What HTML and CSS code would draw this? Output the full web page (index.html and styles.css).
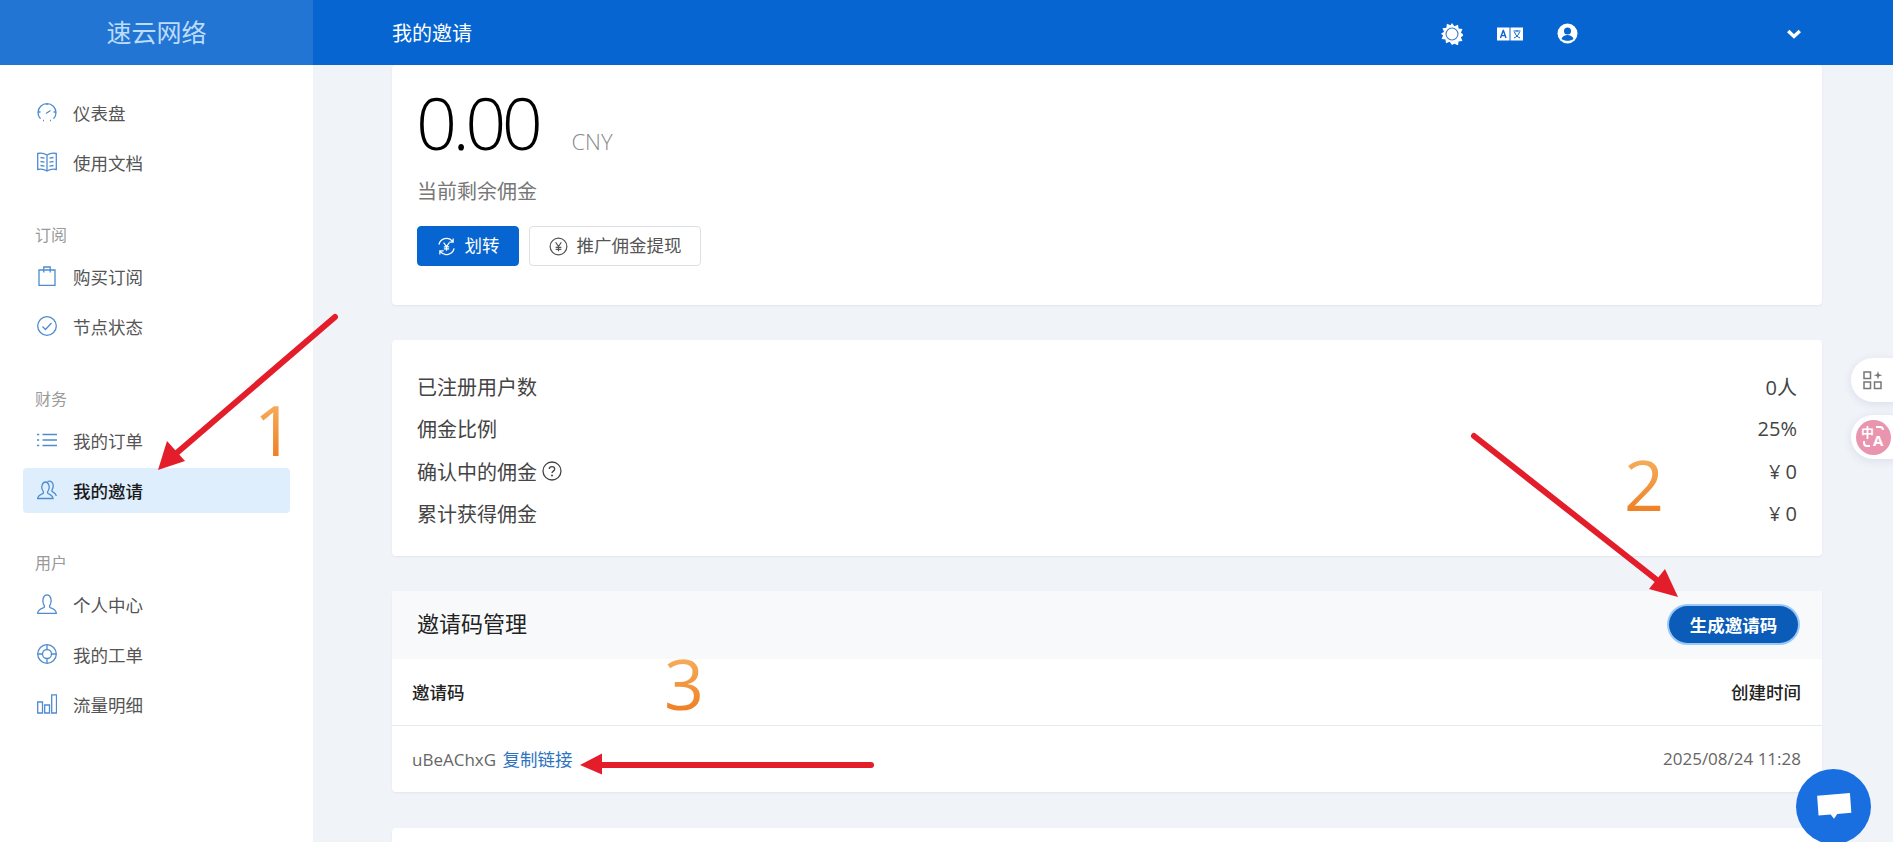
FILE: index.html
```html
<!DOCTYPE html>
<html lang="zh-CN">
<head>
  <meta charset="UTF-8">
  <title>我的邀请</title>
  <link rel="stylesheet" href="styles.css">
</head>
<body>
  <div class="page">
    <!-- Top bar -->
    <header class="topbar">
      <div class="brand">速云网络</div>
      <div class="topbar-main">
        <div class="page-title">我的邀请</div>
        <div class="topbar-tools">
          <svg class="tool-sun" width="22" height="22" viewBox="0 0 24 24">
            <path fill="#fff" d="M12 0l2.600 3.500 4-1.700.5 4.300 4.300.5-1.700 4 3.500 2.400-3.500 2.600 1.700 4-4.300.5-.5 4.300-4-1.700L12 24l-2.600-3.500-4 1.700-.5-4.300-4.300-.5 1.700-4L-.2 12l3.500-2.400-1.700-4 4.300-.5.5-4.300 4 1.700z"/>
            <circle cx="12" cy="12" r="6.500" fill="#fff" stroke="#3b7cc9" stroke-width="1.200"/>
          </svg>
          <svg class="tool-lang" width="26" height="14" viewBox="0 0 26 14">
            <rect x="0" y="0.500" width="12.500" height="13" fill="#fff"/>
            <rect x="13.500" y="0.500" width="12.500" height="13" fill="#fff"/>
            <path d="M3.500 11l2.700-7.500h.2L9 11M4.500 8.600h3.600" fill="none" stroke="#0665d0" stroke-width="1.400"/>
            <path d="M16.500 4h7M20 3v1.500M17.500 5c1 3 3 5 5.500 6M22.500 5c-1 3-3 5-5.500 6" fill="none" stroke="#0665d0" stroke-width="1"/>
          </svg>
          <svg class="tool-user" width="21" height="21" viewBox="0 0 21 21">
            <circle cx="10.500" cy="10.500" r="10" fill="#fff"/>
            <circle cx="10.500" cy="8" r="3.500" fill="#0665d0"/>
            <path d="M4.500 16c1-3 3.500-4 6-4s5 1 6 4c-3 2.400-9 2.400-12 0z" fill="#0665d0"/>
          </svg>
          <svg class="tool-chevron" width="14" height="10" viewBox="0 0 14 10">
            <path d="M1.200 2l5.800 5.500L12.800 2" fill="none" stroke="#fff" stroke-width="3.400"/>
          </svg>
        </div>
      </div>
    </header>

    <!-- Sidebar navigation -->
    <nav class="sidebar">
      <a class="nav-item">
        <svg class="nav-icon" viewBox="0 0 20 20"><path d="M3.500 16.800A9 9 0 1 1 16.500 16.800M6 18.500h1M13 18.500h1M9 11.500l4.500-3M10 1v2M1.500 10h2M16.500 10h2"/></svg>
        仪表盘
      </a>
      <a class="nav-item">
        <svg class="nav-icon" viewBox="0 0 20 20"><path d="M.7 1.500c3.300-.8 6.300-.3 9.300 1.500 3-1.800 6-2.300 9.300-1.500v16c-3.300-.8-6.300-.3-9.300 1.500-3-1.800-6-2.300-9.300-1.500zM10 3v16M3.500 5.500l4 .7M3.500 9.500l4 .7M3.500 13.500l4 .7M12.500 6.200l4-.7M12.500 10.200l4-.7M12.500 14.200l4-.7"/></svg>
        使用文档
      </a>

      <div class="nav-label">订阅</div>
      <a class="nav-item">
        <svg class="nav-icon" viewBox="0 0 20 20"><path d="M2 4h16v15.500H2zM6.800 6.500V1h6.400v5.500"/></svg>
        购买订阅
      </a>
      <a class="nav-item">
        <svg class="nav-icon" viewBox="0 0 20 20"><circle cx="10" cy="10" r="9.300"/><path d="M5.500 10.500l3 3 6-6.500"/></svg>
        节点状态
      </a>

      <div class="nav-label">财务</div>
      <a class="nav-item">
        <svg class="nav-icon" viewBox="0 0 20 20"><path d="M5.500 4.500H20M5.500 10H20M5.500 15.500H20M0 4.500h2.200M0 10h2.200M0 15.500h2.200"/></svg>
        我的订单
      </a>
      <a class="nav-item nav-item-active">
        <svg class="nav-icon" viewBox="0 0 20 20"><path d="M.7 18.500c0-3 2.800-4 5.300-5 1-1 .5-2-.5-3.500C4 7.500 5 2 8.500 2c3.500 0 4.500 5.500 3 8-1 1.500-1.500 2.500-.5 3.500 2 1 5 2 5 5zM10.500 1.500c3.500-1.500 6.500 1.500 5.500 6-.3 1.500-1.500 2.500-1 4 1.500 1 4 1.500 4.300 4.500"/></svg>
        我的邀请
      </a>

      <div class="nav-label">用户</div>
      <a class="nav-item">
        <svg class="nav-icon" viewBox="0 0 20 20"><path d="M.7 19.300c0-3.800 3.300-4.800 6.300-5.800 1-1 .5-2-.5-3.500C5 7 6 .8 10 .8s5 6.200 3.500 9.200c-1 1.500-1.500 2.500-.5 3.500 3 1 6.300 2 6.300 5.800z"/></svg>
        个人中心
      </a>
      <a class="nav-item">
        <svg class="nav-icon" viewBox="0 0 20 20"><circle cx="10" cy="10" r="9.300"/><circle cx="10" cy="10" r="4.500"/><path d="M10 .7v4.800M10 14.500v4.800M.7 10h4.800M14.500 10h4.800"/></svg>
        我的工单
      </a>
      <a class="nav-item">
        <svg class="nav-icon" viewBox="0 0 20 20"><path d="M.7 8h4.800v11H.7zM7.700 11h4.800v8H7.700zM14.700 .8h4.800V19h-4.800z"/></svg>
        流量明细
      </a>
    </nav>

    <!-- Page content -->
    <main class="content">
      <section class="card balance-card">
        <div class="balance-line">
          <span class="balance-value">0.00</span>
          <span class="balance-unit">CNY</span>
        </div>
        <div class="balance-label">当前剩余佣金</div>
        <div class="balance-actions">
          <button class="btn btn-primary">
            <svg class="btn-icon" viewBox="0 0 20 20">
              <path d="M2 8a8.300 8.300 0 0 1 14.500-3.500M18 12a8.300 8.300 0 0 1-14.500 3.500M17 1.500v4h-4M3 18.500v-4h4"/>
              <path d="M7 6l3 4 3-4M10 10v4.500M7.200 10.500h5.600M7.200 12.500h5.600"/>
            </svg>
            划转
          </button>
          <button class="btn btn-outline">
            <svg class="btn-icon" viewBox="0 0 20 20">
              <circle cx="10" cy="10" r="8.800"/>
              <path d="M7 5.500l3 4.500 3-4.500M10 10v5M7 11h6M7 13h6"/>
            </svg>
            推广佣金提现
          </button>
        </div>
      </section>

      <section class="card stats-card">
        <div class="stat-row"><span>已注册用户数</span><span>0人</span></div>
        <div class="stat-row"><span>佣金比例</span><span>25%</span></div>
        <div class="stat-row">
          <span class="stat-help">确认中的佣金
            <svg width="20" height="20" viewBox="0 0 20 20"><circle cx="10" cy="10" r="9" fill="none" stroke="#444" stroke-width="1.300"/><path d="M7.300 8c0-3.200 5.400-3.200 5.400 0 0 2.200-2.700 2-2.700 4" fill="none" stroke="#444" stroke-width="1.300"/><circle cx="10" cy="14.600" r="1" fill="#444"/></svg>
          </span>
          <span>¥ 0</span>
        </div>
        <div class="stat-row"><span>累计获得佣金</span><span>¥ 0</span></div>
      </section>

      <section class="card codes-card">
        <div class="codes-header">
          <h3 class="codes-title">邀请码管理</h3>
          <button class="btn-generate">生成邀请码</button>
        </div>
        <div class="codes-row codes-head">
          <span>邀请码</span>
          <span>创建时间</span>
        </div>
        <div class="codes-row">
          <span>uBeAChxG <a class="copy-link">复制链接</a></span>
          <span>2025/08/24 11:28</span>
        </div>
      </section>

      <section class="card next-card"></section>
    </main>
  </div>

  <!-- Floating extension buttons -->
  <div class="float-btn float-apps">
    <svg width="20" height="20" viewBox="0 0 20 20" fill="none" stroke="#777" stroke-width="1.500">
      <rect x="1" y="2" width="6.500" height="6.500"/>
      <rect x="1" y="12" width="6.500" height="6.500"/>
      <rect x="11.500" y="12" width="6.500" height="6.500"/>
      <path d="M15 1l1 3.300 3.300 1-3.300 1-1 3.300-1-3.300-3.300-1 3.300-1z" fill="#777" stroke="none"/>
    </svg>
  </div>
  <div class="float-btn float-translate">
    <div class="translate-badge">
      <span>中</span>
      <span class="translate-a">A</span>
      <svg class="translate-arcs" width="35" height="35" viewBox="0 0 35 35" fill="none" stroke="#fff" stroke-width="2">
        <path d="M20 7h4c2 0 3 1 3 3"/>
        <path d="M8 21v2c0 2 1 3 3 3h3"/>
      </svg>
    </div>
  </div>

  <!-- Chat launcher -->
  <div class="chat-btn">
    <svg width="36" height="30" viewBox="0 0 38 32"><path fill="#fff" d="M1 4l35-3 1.500 21-15 1.500-3.500 5-3.500-4.500-13 1z"/></svg>
  </div>

  <!-- Annotations drawn over the screenshot -->
  <svg class="arrows" width="1893" height="842" viewBox="0 0 1893 842">
    <g fill="#e31e2a" stroke="#e31e2a">
      <path d="M335 317L172 457" stroke-width="6" stroke-linecap="round"/>
      <path d="M158 470l9-29 18 20z" stroke="none"/>
      <path d="M1474 436L1662 584" stroke-width="6" stroke-linecap="round"/>
      <path d="M1678 597l-29-8 16-20z" stroke="none"/>
      <path d="M871 765H600" stroke-width="6" stroke-linecap="round"/>
      <path d="M580 765l22-11.500v21z" stroke="none"/>
    </g>
  </svg>
  <span class="step step-one">1</span>
  <span class="step step-two">2</span>
  <span class="step step-three">3</span>
</body>
</html>
```

FILE: styles.css
```css
/* Page base */
* {
  box-sizing: border-box;
}

html,
body {
  margin: 0;
  height: 100%;
  overflow: hidden;
}

body {
  position: relative;
  background: #f0f3f8;
  color: #444;
  font-family: "Open Sans", "Noto Sans CJK SC", sans-serif;
  font-size: 17px;
}

.page {
  display: grid;
  grid-template-columns: 313px 1fr;
  grid-template-rows: 65px 1fr;
  height: 842px;
}

/* Top bar */
.topbar {
  grid-column: 1 / 3;
  display: flex;
  background: #0665d0;
}

.brand {
  width: 313px;
  background: #2375d4;
  color: #bcdcfb;
  font-size: 25px;
  line-height: 65px;
  text-align: center;
}

.topbar-main {
  flex: 1;
  display: flex;
  align-items: center;
  padding: 0 92px 0 79px;
}

.page-title {
  color: #fff;
  font-size: 20px;
}

.topbar-tools {
  margin-left: auto;
  display: flex;
  align-items: center;
  padding-top: 2px;
}

.tool-lang {
  margin-left: 34px;
}

.tool-user {
  margin-left: 34.500px;
}

.tool-chevron {
  margin-left: 209px;
}

/* Sidebar */
.sidebar {
  display: flex;
  flex-direction: column;
  background: #fff;
  padding-top: 22px;
}

.nav-item {
  display: flex;
  align-items: center;
  gap: 16px;
  height: 45px;
  margin: 2.500px 23px;
  padding-left: 14px;
  border-radius: 4px;
  color: #555;
  font-size: 17.500px;
}

.nav-item-active {
  background: #deeefd;
  color: #1a1a1a;
  font-weight: 500;
}

.nav-icon {
  width: 20px;
  height: 20px;
  flex-shrink: 0;
  fill: none;
  stroke: #4f8ccf;
  stroke-width: 1.300;
}

.nav-label {
  height: 64px;
  padding: 36px 0 0 35px;
  color: #999;
  font-size: 16px;
  line-height: 24px;
}

/* Content column */
.content {
  padding: 0 71px 0 79px;
  overflow: hidden;
}

.card {
  background: #fff;
  border-radius: 4px;
  box-shadow: 0 1px 2px rgba(60, 80, 120, 0.08);
  margin-bottom: 35px;
}

/* Balance card */
.balance-card {
  height: 240px;
  padding: 17px 25px 0;
}

.balance-line {
  display: flex;
  align-items: baseline;
  gap: 33px;
  height: 80px;
  margin-left: -1px;
}

.balance-value {
  color: #000;
  font-size: 72px;
  font-weight: 300;
  letter-spacing: -4.500px;
  line-height: 80px;
}

.balance-unit {
  color: #888;
  font-size: 22px;
  font-weight: 300;
}

.balance-label {
  margin-top: 16px;
  color: #777;
  font-size: 20px;
  line-height: 28px;
}

.balance-actions {
  display: flex;
  gap: 10px;
  margin-top: 20px;
}

.btn {
  display: flex;
  align-items: center;
  justify-content: center;
  gap: 9px;
  height: 40px;
  padding: 0 0 4px;
  border-radius: 4px;
  font-family: inherit;
  font-size: 17.500px;
}

.btn-icon {
  width: 19px;
  height: 19px;
  margin-top: 4px;
  fill: none;
  stroke: currentColor;
  stroke-width: 1.300;
}

.btn-primary {
  width: 102px;
  background: #0665d0;
  border: 1px solid #0665d0;
  color: #fff;
}

.btn-outline {
  width: 172px;
  background: #fff;
  border: 1px solid #dcdfe4;
  color: #555;
}

/* Stats card */
.stats-card {
  height: 216px;
  padding: 25px 25px 21px;
}

.stat-row {
  display: flex;
  justify-content: space-between;
  align-items: center;
  height: 42.500px;
  font-size: 20px;
}

.stat-help {
  display: flex;
  align-items: center;
  gap: 5px;
}

/* Invite codes card */
.codes-card {
  height: 201px;
  margin-bottom: 36px;
}

.codes-header {
  display: flex;
  justify-content: space-between;
  align-items: center;
  height: 68px;
  padding: 0 24px 0 25px;
  background: #f8f9fb;
}

.codes-title {
  margin: 0 0 6px;
  color: #222;
  font-size: 22px;
  font-weight: 400;
}

.btn-generate {
  width: 129px;
  height: 37px;
  margin-bottom: 2px;
  background: #0a5cb8;
  border: none;
  border-radius: 19px;
  box-shadow: 0 0 0 2px #9cc8f7;
  color: #fff;
  font-family: inherit;
  font-size: 17.500px;
  font-weight: 700;
}

.codes-row {
  display: flex;
  justify-content: space-between;
  align-items: center;
  height: 66.500px;
  padding: 0 21px 0 20px;
  color: #666;
}

.codes-head {
  border-bottom: 1px solid #e6e9ee;
  color: #222;
  font-size: 17.500px;
  font-weight: 500;
}

.copy-link {
  margin-left: 2px;
  color: #2e73c0;
  font-size: 17.500px;
}

.next-card {
  height: 100px;
  margin-bottom: 0;
}

/* Floating extension buttons */
.float-btn {
  position: absolute;
  left: 1851px;
  width: 60px;
  height: 44px;
  display: flex;
  align-items: center;
  padding-left: 12px;
  background: #fff;
  border-radius: 22px;
  box-shadow: 0 2px 8px rgba(60, 80, 120, 0.12);
}

.float-apps {
  top: 358px;
}

.float-translate {
  top: 415px;
  padding-left: 5px;
}

.translate-badge {
  position: relative;
  width: 35px;
  height: 35px;
  border-radius: 50%;
  background: #e995b0;
  color: #fff;
  font-size: 13px;
  font-weight: 700;
  line-height: 1;
}

.translate-badge span {
  position: absolute;
  left: 5px;
  top: 6px;
}

.translate-badge .translate-a {
  left: 17px;
  top: 13px;
  font-size: 15px;
}

.translate-arcs {
  position: absolute;
  left: 0;
  top: 0;
}

/* Chat launcher */
.chat-btn {
  position: absolute;
  left: 1796px;
  top: 769px;
  width: 75px;
  height: 75px;
  display: flex;
  align-items: center;
  justify-content: center;
  border-radius: 50%;
  background: #1a6fe0;
}

/* Tutorial annotations */
.arrows {
  position: absolute;
  left: 0;
  top: 0;
  pointer-events: none;
}

.step {
  position: absolute;
  font-size: 70px;
  line-height: 70px;
  background: linear-gradient(#f6b565, #ee7a1e);
  -webkit-background-clip: text;
  background-clip: text;
  color: transparent;
}

.step-one {
  left: 254px;
  top: 394px;
}

.step-two {
  left: 1624px;
  top: 449px;
}

.step-three {
  left: 664px;
  top: 648px;
}
```
